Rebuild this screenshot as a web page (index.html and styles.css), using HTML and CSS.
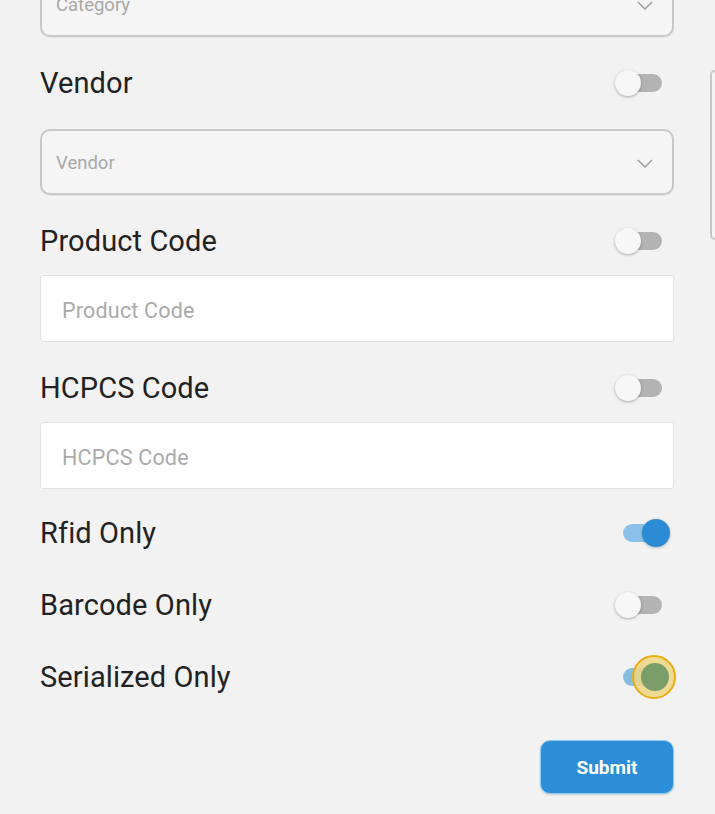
FILE: index.html
```html
<!DOCTYPE html>
<html>
<head>
<meta charset="utf-8">
<link rel="stylesheet" href="styles.css">
</head>
<body>
<div class="page">
  <form class="form">
    <div class="select first">
      <span class="select-text">Category</span>
      <svg class="chev" width="16" height="9" viewBox="0 0 16 9"><path d="M1 1 L8 8 L15 1" fill="none" stroke="#9a9a9a" stroke-width="1.4"/></svg>
    </div>

    <div class="row label-row">
      <span class="label">Vendor</span>
      <span class="toggle"><span class="track"></span><span class="thumb"></span></span>
    </div>
    <div class="select">
      <span class="select-text">Vendor</span>
      <svg class="chev" width="16" height="9" viewBox="0 0 16 9"><path d="M1 1 L8 8 L15 1" fill="none" stroke="#9a9a9a" stroke-width="1.4"/></svg>
    </div>

    <div class="row label-row">
      <span class="label">Product Code</span>
      <span class="toggle"><span class="track"></span><span class="thumb"></span></span>
    </div>
    <div class="input"><span class="placeholder">Product Code</span></div>

    <div class="row label-row">
      <span class="label">HCPCS Code</span>
      <span class="toggle"><span class="track"></span><span class="thumb"></span></span>
    </div>
    <div class="input"><span class="placeholder">HCPCS Code</span></div>

    <div class="toggles">
      <div class="row switch-row">
        <span class="label">Rfid Only</span>
        <span class="toggle on"><span class="track"></span><span class="thumb"></span></span>
      </div>
      <div class="row switch-row">
        <span class="label">Barcode Only</span>
        <span class="toggle"><span class="track"></span><span class="thumb"></span></span>
      </div>
      <div class="row switch-row">
        <span class="label">Serialized Only</span>
        <span class="toggle on focused"><span class="track"></span><span class="halo"></span><span class="thumb"></span></span>
      </div>
    </div>

    <div class="actions">
      <button type="button" class="submit">Submit</button>
    </div>
  </form>
  <div class="side-panel"></div>
</div>
</body>
</html>
```
FILE: styles.css
```css
html, body {
  margin: 0;
  padding: 0;
  background: #f2f2f2;
  overflow: hidden;
}
body {
  font-family: Roboto, "Liberation Sans", sans-serif;
  width: 715px;
  height: 814px;
}
.page {
  position: relative;
  width: 715px;
  height: 814px;
  overflow: hidden;
}
.form {
  display: flex;
  flex-direction: column;
  margin: -29px 41px 0 40px;
}
.select {
  box-sizing: border-box;
  height: 66px;
  margin-top: 12px;
  border: 2px solid #c9c9c9;
  border-radius: 10px;
  background: #f5f5f5;
  display: flex;
  align-items: center;
  justify-content: space-between;
  padding: 2px 19px 0 14px;
  box-shadow: 0 1px 1px rgba(0,0,0,0.06);
}
.select.first {
  margin-top: 0;
}
.select-text {
  font-size: 18.5px;
  color: #a8a8a8;
}
.chev {
  display: block;
}
.row {
  display: flex;
  align-items: center;
  justify-content: space-between;
}
.label-row {
  height: 68px;
  margin-top: 12px;
}
.label {
  font-size: 29px;
  color: #222222;
  letter-spacing: 0.1px;
}
.input {
  box-sizing: border-box;
  height: 67px;
  border: 1px solid #e2e2e2;
  border-radius: 3px;
  background: #ffffff;
  display: flex;
  align-items: center;
  padding: 4px 0 0 21px;
}
.placeholder {
  font-size: 21.5px;
  color: #aaaaaa;
  letter-spacing: 0.2px;
}
.toggles {
  display: flex;
  flex-direction: column;
  margin-top: 8px;
}
.switch-row {
  height: 72px;
}
.toggle {
  position: relative;
  width: 56px;
  height: 28px;
  margin-right: 3px;
}
.track {
  position: absolute;
  left: 8px;
  top: 5px;
  width: 39px;
  height: 18px;
  border-radius: 9px;
  background: #b3b3b3;
}
.thumb {
  position: absolute;
  left: 0;
  top: 1px;
  width: 26px;
  height: 26px;
  border-radius: 50%;
  background: #f7f7f7;
  box-shadow: 0 1px 3px rgba(0,0,0,0.3);
}
.toggle.on .track {
  background: #8cc2ea;
}
.toggle.on .thumb {
  left: 27px;
  top: 0;
  width: 28px;
  height: 28px;
  background: #2b8bd5;
  box-shadow: 0 1px 3px rgba(0,0,0,0.25);
}
.toggle.focused .thumb {
  left: 26px;
  top: 0;
  background: #7b9d6a;
  box-shadow: none;
}
.toggle.focused .track {
  background: #86bde0;
}
.halo {
  position: absolute;
  left: 17px;
  top: -8px;
  width: 40px;
  height: 40px;
  border-radius: 50%;
  border: 2px solid #e6ad10;
  background: rgba(240, 214, 130, 0.85);
}
.actions {
  display: flex;
  justify-content: flex-end;
  margin-top: 27px;
}
.submit {
  width: 134px;
  height: 54px;
  border: 1px solid #8fcbf0;
  border-radius: 10px;
  background: #2c8ed6;
  color: #ffffff;
  font-family: Roboto, "Liberation Sans", sans-serif;
  font-size: 19px;
  font-weight: 700;
  box-shadow: 0 1px 2px rgba(0,0,0,0.15);
  padding: 0;
}
.side-panel {
  position: absolute;
  left: 710px;
  top: 70px;
  width: 30px;
  height: 170px;
  box-sizing: border-box;
  border: 2px solid #c8c8c8;
  border-radius: 5px;
  background: #f4f4f4;
}
```
